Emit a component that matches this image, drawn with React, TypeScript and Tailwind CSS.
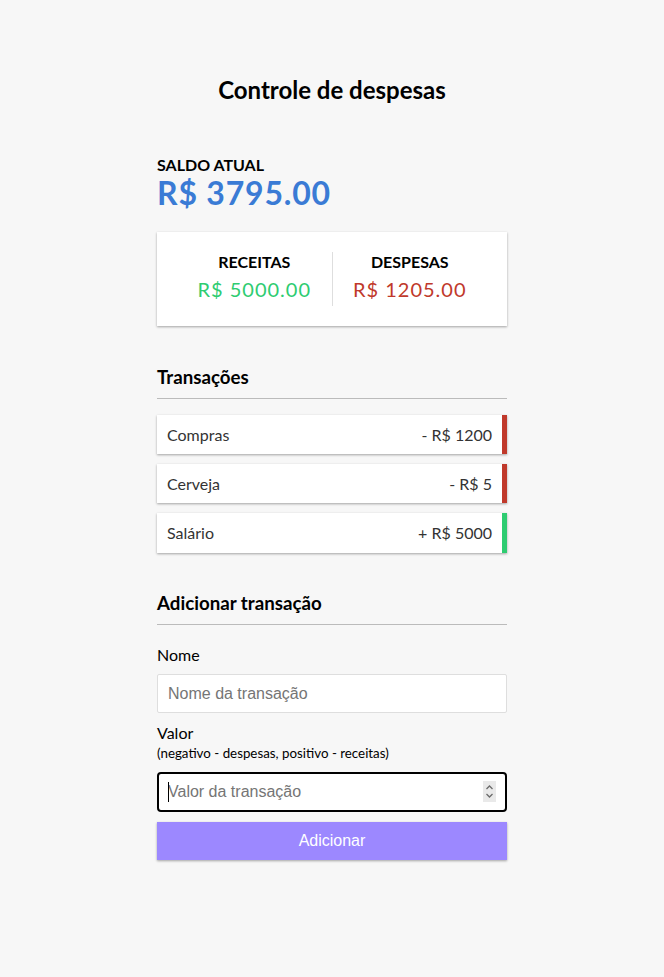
export default function App() {
  const transactions = [
    { id: 1, text: "Compras", amount: -1200 },
    { id: 2, text: "Cerveja", amount: -5 },
    { id: 3, text: "Salário", amount: 5000 },
  ];

  return (
    <div className="min-h-screen bg-[#f7f7f7] flex justify-center font-['Lato',sans-serif] leading-[1.2] text-black">
      <div className="w-[350px] pt-[76px]">
        <h2 className="text-[24px] font-bold text-center">Controle de despesas</h2>

        <h4 className="mt-[50px] text-[16px] font-bold uppercase">Saldo atual</h4>
        <h1 className="text-[32px] font-bold tracking-[0.8px] text-[#3a7bd5]">R$ 3795.00</h1>

        {/* receitas / despesas */}
        <div className="mt-[20px] bg-white p-[20px] flex shadow-[0_1px_3px_rgba(0,0,0,0.12),0_1px_2px_rgba(0,0,0,0.24)]">
          <div className="flex-1 text-center border-r border-[#dedede]">
            <h4 className="text-[16px] font-bold uppercase">Receitas</h4>
            <p className="text-[20px] tracking-[1px] my-[5px] text-[#2ecc71]">R$ 5000.00</p>
          </div>
          <div className="flex-1 text-center">
            <h4 className="text-[16px] font-bold uppercase">Despesas</h4>
            <p className="text-[20px] tracking-[1px] my-[5px] text-[#c0392b]">R$ 1205.00</p>
          </div>
        </div>

        <h3 className="mt-[40px] text-[18.72px] font-bold border-b border-[#bbb] pb-[10px]">Transações</h3>
        <ul className="mt-[16px] flex flex-col gap-[10px]">
          {transactions.map((t) => (
            <li
              key={t.id}
              className={`bg-white text-[#333] text-[16px] flex justify-between p-[10px] border-r-[5px] shadow-[0_1px_3px_rgba(0,0,0,0.12),0_1px_2px_rgba(0,0,0,0.24)] ${
                t.amount < 0 ? "border-[#c0392b]" : "border-[#2ecc71]"
              }`}
            >
              <span>{t.text}</span>
              <span>
                {t.amount < 0 ? "-" : "+"} R$ {Math.abs(t.amount)}
              </span>
            </li>
          ))}
        </ul>

        <h3 className="mt-[39px] text-[18.72px] font-bold border-b border-[#bbb] pb-[10px]">Adicionar transação</h3>
        <form className="mt-[10px]">
          <label className="inline-block my-[10px] text-[16px]">Nome</label>
          <input
            type="text"
            placeholder="Nome da transação"
            className="block w-full h-[39px] bg-white border border-[#dedede] rounded-[2px] px-[10px] text-[16px] font-['Liberation_Sans',Arial,sans-serif] placeholder:text-[#757575] outline-none"
          />
          <label className="inline-block my-[10px] text-[16px]">
            Valor
            <br />
            <span className="text-[13.33px]">(negativo - despesas, positivo - receitas)</span>
          </label>
          <div className="relative">
            <input
              type="text"
              placeholder="Valor da transação"
              className="block w-full h-[40px] bg-white border-2 border-black rounded-[4px] px-[9px] text-[16px] font-['Liberation_Sans',Arial,sans-serif] placeholder:text-[#757575] outline-none"
            />
            {/* caret */}
            <span className="absolute left-[11px] top-[10px] w-px h-[20px] bg-black" />
            {/* spin buttons */}
            <span className="absolute right-[11px] top-[9px] w-[13px] h-[21px] bg-[#e9e9e9] flex items-center justify-center">
              <svg width="9" height="17" viewBox="0 0 9 17" fill="none" stroke="#6b6b6b" strokeWidth="1.3">
                <path d="M1.5 6 L4.5 3 L7.5 6" />
                <path d="M1.5 11 L4.5 14 L7.5 11" />
              </svg>
            </span>
          </div>
          <button
            type="button"
            className="block w-full h-[38px] mt-[10px] mb-[30px] bg-[#9c88ff] text-white text-[16px] font-['Liberation_Sans',Arial,sans-serif] shadow-[0_1px_3px_rgba(0,0,0,0.12),0_1px_2px_rgba(0,0,0,0.24)]"
          >
            Adicionar
          </button>
        </form>
      </div>
    </div>
  );
}
